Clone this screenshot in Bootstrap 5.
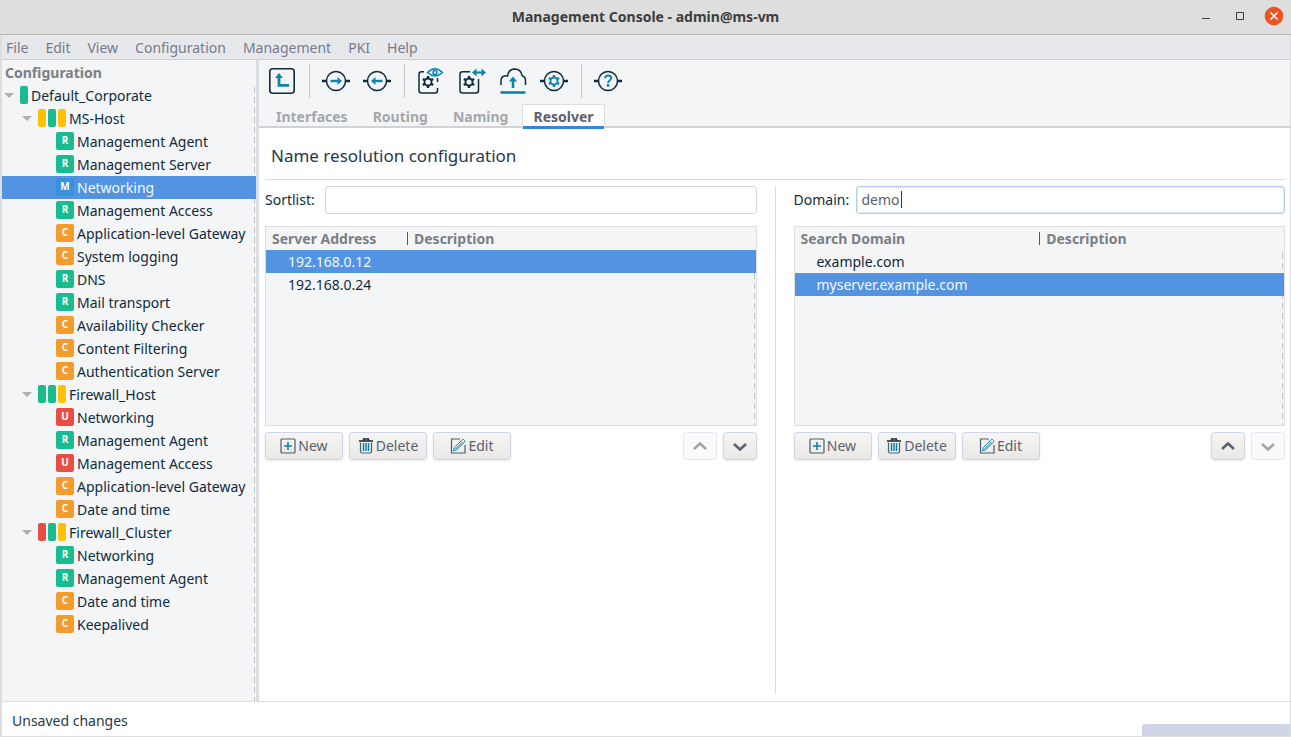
<!DOCTYPE html>
<html lang="en">
<head>
<meta charset="utf-8">
<meta name="viewport" content="width=device-width, initial-scale=1">
<title>Management Console - admin@ms-vm</title>
<link rel="stylesheet" href="https://cdn.jsdelivr.net/npm/bootstrap@5.3.0/dist/css/bootstrap.min.css">
<style>
:root { --ink:#0f2b3d; --panel:#f4f5f7; --line:#dcdee2; --sel:#5294e2; --teal:#0f83ad; --ok:#19bc8e; --warn:#ffc107; --bad:#e74f43; --conf:#f39c2e; }
body { font-family:"Noto Sans","Open Sans",sans-serif; font-size:14px; line-height:22px; color:var(--ink); background:#fff; white-space:nowrap; }
.app-window { border:solid #dddee0; border-width:0 1px 1px 2px; }
.title-strip { height:35px; background:#dedede; border-bottom:1px solid #b6b6b6; margin:0 -1px 0 -2px; color:#3d3d3d; }
.title-strip h1 { font-size:14px; line-height:22px; }
.win-buttons { right:7px; top:6px; }
.win-buttons button, .tool-button { background:none; border:0; padding:0; }
.menu-strip { height:25px; background:#e7e8ec; border-bottom:1px solid #cbced4; padding:2px 0 0 4px; gap:17px; }
.menu-strip a { color:#767b8c; font-size:14px; }
.side { width:257px; background:var(--panel); border-right:3px solid #dadde3; }
.side h2 { font-size:14px; line-height:22px; color:#7b7f86; padding:2px 0 0 3px; }
.edge { background-image:repeating-linear-gradient(to bottom,#bfc2c6 0 6px,transparent 6px 10px); background-size:1px 100%; background-repeat:no-repeat; background-position:right 1px top 3px; }
.tree, .tree ul { list-style:none; margin:0; padding:0; }
.tree-row { height:23px; gap:3px; }
.lvl-1 { padding-left:2px; } .lvl-2 { padding-left:20px; } .lvl-3 { padding-left:54px; }
.picked { background-color:var(--sel); color:#f3f7fd; }
.twisty { width:10px; height:5px; background:#adb0b4; clip-path:polygon(0 0,100% 0,50% 100%); margin-right:3px; }
.bars { gap:2px; margin-bottom:1px; }
.bars i { width:8px; height:18px; border-radius:2px; }
.state { width:18px; height:18px; margin-bottom:1px; border-radius:2px; color:#fff; font:700 10px/17px "Open Sans",sans-serif; text-align:center; }
.s-ok { background:var(--ok); } .s-warn { background:var(--warn); } .s-bad { background:var(--bad); } .s-conf { background:var(--conf); } .s-mod { background:#3792dc; }
.tool-strip { background:var(--panel); height:44px; padding:0 0 2px 9px; gap:13px; }
.tool-button { width:28px; height:28px; }
.tool-button svg, .win-buttons svg { display:block; }
.tool-sep { width:1px; height:34px; margin-right:-1px; background:#c5c7ca; }
.tab-strip { background:var(--panel); height:24px; padding-left:6px; gap:3px; box-shadow:inset 0 -2px #d1d2d5; }
.tab-strip button { border:1px solid transparent; border-bottom:0; background:none; color:#a5a7ab; font-size:14px; font-weight:700; line-height:24px; height:25px; padding:0 10px; }
.tab-strip .current { color:#5c616c; background:#fff; border-color:var(--line); box-shadow:inset 0 -3px #3584e4; }
.page { padding:0 5px 7px 6px; }
.page h2 { font-size:17px; line-height:24px; padding:16px 6px 11px; margin:0 0 6px; border-bottom:1px solid var(--line); color:#26394a; }
.half { flex:1 1 0; min-width:0; }
.divider { width:1px; background:var(--line); margin:0 18px; }
.sort-label { width:60px; }
.domain-label { width:62px; }
.field { height:28px; border:1px solid #cfd6e6; border-radius:3px; padding:0 5px 2px; color:#5c616c; font-size:14px; outline:0; background:#fff; }
.field.active { border-color:#b7cbe9; box-shadow:inset 0 0 0 1px #e0eaf8; }
.cursor { width:1px; height:17px; background:#30343c; left:45px; top:5px; }
.grid-box { height:200px; background-color:var(--panel); border:1px solid var(--line); margin:12px 0 6px; overflow:hidden; background-position:right 1px top 26px; }
.grid-box table { width:100%; table-layout:fixed; border-collapse:separate; border-spacing:0; }
.grid-box th { height:23px; padding:0 6px; color:#7b7f86; line-height:22px; }
.grid-box th + th { background:linear-gradient(#555a63,#555a63) 0 5px/1px 13px no-repeat; padding-left:7px; }
.grid-box td { height:23px; padding:0 22px; line-height:22px; }
.col-address { width:141px; }
.actions { gap:6px; }
.act { height:28px; min-width:78px; font-size:14px; line-height:22px; color:#5c616c; border:1px solid #cfd6e6; border-radius:3px; background:linear-gradient(#f6f5f4,#e9e8e6); box-shadow:0 1px 3px rgba(0,0,0,.08); padding:0; }
.act svg { margin:-3px 2px 0 0; }
.act.arrow { min-width:34px; }
.act.arrow svg { margin-right:0; }
.act:disabled { background:#fafafa; border-color:#e4e6f1; box-shadow:none; color:#a4a5aa; }
.status-strip { height:35px; border-top:1px solid var(--line); padding-left:10px; color:#26394a; }
.status-strip .note { padding-top:3px; }
.meter { width:148px; height:12px; background:#d0d5e5; border-radius:3px 0 0 0; }
</style>
</head>
<body>
<svg width="0" height="0" class="position-absolute" aria-hidden="true">
  <symbol id="i-gear" viewBox="0 0 14 14"><g fill="none" stroke="currentColor"><circle cx="7" cy="7" r="3.8" stroke-width="2"/><path d="M7 .5v2.400M7 11.100v2.400M1.400 3.700l2 1.200M10.600 9.100l2 1.200M1.400 10.300l2-1.200M10.600 4.900l2-1.200" stroke-width="2.600"/></g></symbol>
  <symbol id="i-ring" viewBox="0 0 28 28"><g fill="none" stroke="#0f2b3d"><circle cx="14" cy="14" r="9.500" stroke-width="1.500"/><path d="M0 14h5M23 14h5" stroke-width="2.600"/></g></symbol>
  <symbol id="i-plus" viewBox="0 0 16 16"><rect x="1" y="1" width="14" height="14" rx="1" fill="none" stroke="#49606e" stroke-width="1.200"/><path d="M8 4v8M4 8h8" stroke="#0f83ad" stroke-width="1.600"/></symbol>
  <symbol id="i-bin" viewBox="0 0 16 16"><path d="M2.500 4.500v9q0 1.500 1.500 1.500h8q1.500 0 1.500-1.500v-9" fill="none" stroke="#49606e" stroke-width="1.200"/><path d="M1 3h14M5.500 2.500V1h5v1.500" fill="none" stroke="#0f2b3d" stroke-width="1.300"/><path d="M5.500 5v8M8 5v8M10.500 5v8" stroke="#0f83ad" stroke-width="1.500"/></symbol>
  <symbol id="i-pen" viewBox="0 0 16 16"><path d="M10 1H1.500v14H15V7" fill="none" stroke="#49606e" stroke-width="1.200"/><path d="M3.500 12.800l.8-3.200 8-8q.6-.6 1.300 0l1 1q.6.700 0 1.300l-8 8zM5.500 11l7-7" fill="none" stroke="#0f83ad"/></symbol>
  <symbol id="i-up" viewBox="0 0 16 16"><path d="M2 11l6-5.500 6 5.500" fill="none" stroke="currentColor" stroke-width="2.600"/></symbol>
  <symbol id="i-down" viewBox="0 0 16 16"><path d="M2 6l6 5.500L14 6" fill="none" stroke="currentColor" stroke-width="2.600"/></symbol>
</svg>

<div class="app-window d-flex flex-column min-vh-100">
  <header class="title-strip position-relative d-flex align-items-center justify-content-center">
    <h1 class="m-0 fw-bold">Management Console - admin@ms-vm</h1>
    <div class="win-buttons position-absolute d-flex">
      <button type="button" aria-label="Minimize"><svg width="34" height="20"><path d="M9 12.500h8" stroke="#3d3d3d"/></svg></button>
      <button type="button" aria-label="Maximize"><svg width="37" height="20"><rect x="9.500" y="6.500" width="7" height="7" fill="none" stroke="#3d3d3d"/></svg></button>
      <button type="button" aria-label="Close"><svg width="20" height="20"><circle cx="10" cy="10" r="9.300" fill="#e95420"/><path d="M6.500 6.500l7 7M13.500 6.500l-7 7" stroke="#fff" stroke-width="1.500"/></svg></button>
    </div>
  </header>
  <nav class="menu-strip d-flex align-items-center" aria-label="Main menu">
    <a class="text-decoration-none" href="#">File</a><a class="text-decoration-none" href="#">Edit</a><a class="text-decoration-none" href="#">View</a><a class="text-decoration-none" href="#">Configuration</a><a class="text-decoration-none" href="#">Management</a><a class="text-decoration-none" href="#">PKI</a><a class="text-decoration-none" href="#">Help</a>
  </nav>

  <div class="d-flex flex-grow-1">
    <aside class="side flex-shrink-0 d-flex flex-column">
      <h2 class="m-0 fw-bold">Configuration</h2>
      <div class="edge flex-grow-1">
      <ul class="tree">
        <li><div class="tree-row lvl-1 d-flex align-items-center"><span class="twisty"></span><span class="bars d-flex"><i class="s-ok"></i></span>Default_Corporate</div>
        <ul>
          <li><div class="tree-row lvl-2 d-flex align-items-center"><span class="twisty"></span><span class="bars d-flex"><i class="s-warn"></i><i class="s-ok"></i><i class="s-warn"></i></span>MS-Host</div>
          <ul>
            <li class="tree-row lvl-3 d-flex align-items-center"><span class="state s-ok">R</span>Management Agent</li>
            <li class="tree-row lvl-3 d-flex align-items-center"><span class="state s-ok">R</span>Management Server</li>
            <li class="tree-row lvl-3 d-flex align-items-center picked"><span class="state s-mod">M</span>Networking</li>
            <li class="tree-row lvl-3 d-flex align-items-center"><span class="state s-ok">R</span>Management Access</li>
            <li class="tree-row lvl-3 d-flex align-items-center"><span class="state s-conf">C</span>Application-level Gateway</li>
            <li class="tree-row lvl-3 d-flex align-items-center"><span class="state s-conf">C</span>System logging</li>
            <li class="tree-row lvl-3 d-flex align-items-center"><span class="state s-ok">R</span>DNS</li>
            <li class="tree-row lvl-3 d-flex align-items-center"><span class="state s-ok">R</span>Mail transport</li>
            <li class="tree-row lvl-3 d-flex align-items-center"><span class="state s-conf">C</span>Availability Checker</li>
            <li class="tree-row lvl-3 d-flex align-items-center"><span class="state s-conf">C</span>Content Filtering</li>
            <li class="tree-row lvl-3 d-flex align-items-center"><span class="state s-conf">C</span>Authentication Server</li>
          </ul></li>
          <li><div class="tree-row lvl-2 d-flex align-items-center"><span class="twisty"></span><span class="bars d-flex"><i class="s-ok"></i><i class="s-ok"></i><i class="s-warn"></i></span>Firewall_Host</div>
          <ul>
            <li class="tree-row lvl-3 d-flex align-items-center"><span class="state s-bad">U</span>Networking</li>
            <li class="tree-row lvl-3 d-flex align-items-center"><span class="state s-ok">R</span>Management Agent</li>
            <li class="tree-row lvl-3 d-flex align-items-center"><span class="state s-bad">U</span>Management Access</li>
            <li class="tree-row lvl-3 d-flex align-items-center"><span class="state s-conf">C</span>Application-level Gateway</li>
            <li class="tree-row lvl-3 d-flex align-items-center"><span class="state s-conf">C</span>Date and time</li>
          </ul></li>
          <li><div class="tree-row lvl-2 d-flex align-items-center"><span class="twisty"></span><span class="bars d-flex"><i class="s-bad"></i><i class="s-ok"></i><i class="s-warn"></i></span>Firewall_Cluster</div>
          <ul>
            <li class="tree-row lvl-3 d-flex align-items-center"><span class="state s-ok">R</span>Networking</li>
            <li class="tree-row lvl-3 d-flex align-items-center"><span class="state s-ok">R</span>Management Agent</li>
            <li class="tree-row lvl-3 d-flex align-items-center"><span class="state s-conf">C</span>Date and time</li>
            <li class="tree-row lvl-3 d-flex align-items-center"><span class="state s-conf">C</span>Keepalived</li>
          </ul></li>
        </ul></li>
      </ul>
      </div>
    </aside>

    <main class="flex-grow-1 d-flex flex-column">
      <div class="tool-strip d-flex align-items-center">
        <button class="tool-button" type="button" aria-label="Up"><svg width="28" height="28"><rect x="1.800" y="1.800" width="24.400" height="24.400" rx="3" fill="none" stroke="#0f2b3d" stroke-width="1.600"/><path d="M11 9v9.300h10" fill="none" stroke="#0f83ad" stroke-width="2.800"/><path d="M7 11l4-5 4 5z" fill="#0f83ad"/></svg></button>
        <span class="tool-sep"></span>
        <button class="tool-button" type="button" aria-label="Upload"><svg width="28" height="28"><use href="#i-ring"/><path d="M8.500 14h9" stroke="#0f83ad" stroke-width="2.400"/><path d="M15.500 10l4.500 4-4.500 4z" fill="#0f83ad"/></svg></button>
        <button class="tool-button" type="button" aria-label="Download"><svg width="28" height="28"><use href="#i-ring"/><path d="M10.500 14h9" stroke="#0f83ad" stroke-width="2.400"/><path d="M12.500 10L8 14l4.500 4z" fill="#0f83ad"/></svg></button>
        <span class="tool-sep"></span>
        <button class="tool-button" type="button" aria-label="View configuration"><svg width="28" height="28"><path d="M7 4.800H4.500q-2.500 0-2.500 2.500v16.200q0 2.500 2.500 2.500h13.500q2.500 0 2.500-2.500V21M20.500 15v-4" fill="none" stroke="#0f2b3d" stroke-width="1.500"/><use href="#i-gear" x="4.500" y="8.500" width="13" height="13" color="#0f2b3d"/><path d="M10.500 5.500q7.500-7.500 15 0-7.500 7-15 0z" fill="#e8f5fa" stroke="#0f83ad" stroke-width="1.500"/><circle cx="18" cy="5.500" r="1.900" fill="none" stroke="#0f83ad" stroke-width="1.500"/></svg></button>
        <button class="tool-button" type="button" aria-label="Compare configuration"><svg width="28" height="28"><path d="M12 4.800H4.500q-2.500 0-2.500 2.500v16.200q0 2.500 2.500 2.500h13.500q2.500 0 2.500-2.500V12" fill="none" stroke="#0f2b3d" stroke-width="1.500"/><use href="#i-gear" x="4.500" y="8.500" width="13" height="13" color="#0f2b3d"/><path d="M16 5.500h9" stroke="#0f83ad" stroke-width="2.200"/><path d="M18.500 1.500v8l-4.500-4zM23.500 1.500v8l4.500-4z" fill="#0f83ad"/></svg></button>
        <button class="tool-button" type="button" aria-label="Commit"><svg width="28" height="28"><path d="M2 18v-4q0-4.500 3.500-5 1.500-.4 3 0Q9.500 2.200 15.500 2q6.500 0 7.500 6.500 3.500 1.200 3.500 5.500v4" fill="none" stroke="#0f2b3d" stroke-width="1.500"/><path d="M14 21v-8" stroke="#0f83ad" stroke-width="2.600"/><path d="M9.800 14.500l4.200-5 4.200 5z" fill="#0f83ad"/><path d="M1.500 25.500h25" stroke="#0f83ad" stroke-width="2.600"/></svg></button>
        <button class="tool-button" type="button" aria-label="Settings"><svg width="28" height="28"><use href="#i-ring"/><use href="#i-gear" x="7.500" y="7.500" width="13" height="13" color="#0f83ad"/></svg></button>
        <span class="tool-sep"></span>
        <button class="tool-button" type="button" aria-label="Help"><svg width="28" height="28"><use href="#i-ring"/><path d="M11 11.200q.3-2.700 3.200-2.700 3 0 3 2.500 0 1.500-1.600 2.500-1.500.9-1.500 2.400" fill="none" stroke="#0f83ad" stroke-width="2"/><circle cx="14" cy="18.500" r="1.400" fill="#0f83ad"/></svg></button>
      </div>
      <div class="tab-strip d-flex" role="tablist">
        <button type="button" role="tab">Interfaces</button>
        <button type="button" role="tab">Routing</button>
        <button type="button" role="tab">Naming</button>
        <button type="button" role="tab" class="current" aria-selected="true">Resolver</button>
      </div>
      <div class="page flex-grow-1 d-flex flex-column">
        <h2 class="fw-normal">Name resolution configuration</h2>
        <div class="d-flex flex-grow-1">
          <section class="half">
            <div class="d-flex align-items-center">
              <label class="sort-label" for="sortlist">Sortlist:</label>
              <input class="field flex-grow-1" id="sortlist" type="text">
            </div>
            <div class="grid-box edge">
              <table>
                <colgroup><col class="col-address"><col></colgroup>
                <thead><tr><th>Server Address</th><th>Description</th></tr></thead>
                <tbody><tr class="picked"><td>192.168.0.12</td><td></td></tr><tr><td>192.168.0.24</td><td></td></tr></tbody>
              </table>
            </div>
            <div class="actions d-flex">
              <button class="act" type="button"><svg width="16" height="16"><use href="#i-plus"/></svg>New</button>
              <button class="act" type="button"><svg width="16" height="16"><use href="#i-bin"/></svg>Delete</button>
              <button class="act" type="button"><svg width="16" height="16"><use href="#i-pen"/></svg>Edit</button>
              <button class="act arrow ms-auto" type="button" aria-label="Move up" disabled><svg width="16" height="16"><use href="#i-up"/></svg></button>
              <button class="act arrow" type="button" aria-label="Move down"><svg width="16" height="16"><use href="#i-down"/></svg></button>
            </div>
          </section>
          <div class="divider"></div>
          <section class="half">
            <div class="d-flex align-items-center">
              <label class="domain-label" for="domain">Domain:</label>
              <div class="position-relative flex-grow-1 d-flex"><input class="field active w-100" id="domain" type="text" value="demo"><span class="cursor position-absolute"></span></div>
            </div>
            <div class="grid-box edge">
              <table>
                <colgroup><col class="w-50"><col></colgroup>
                <thead><tr><th>Search Domain</th><th>Description</th></tr></thead>
                <tbody><tr><td>example.com</td><td></td></tr><tr class="picked"><td>myserver.example.com</td><td></td></tr></tbody>
              </table>
            </div>
            <div class="actions d-flex">
              <button class="act" type="button"><svg width="16" height="16"><use href="#i-plus"/></svg>New</button>
              <button class="act" type="button"><svg width="16" height="16"><use href="#i-bin"/></svg>Delete</button>
              <button class="act" type="button"><svg width="16" height="16"><use href="#i-pen"/></svg>Edit</button>
              <button class="act arrow ms-auto" type="button" aria-label="Move up"><svg width="16" height="16"><use href="#i-up"/></svg></button>
              <button class="act arrow" type="button" aria-label="Move down" disabled><svg width="16" height="16"><use href="#i-down"/></svg></button>
            </div>
          </section>
        </div>
      </div>
    </main>
  </div>
  <footer class="status-strip d-flex align-items-center justify-content-between"><span class="note">Unsaved changes</span><span class="meter align-self-end"></span></footer>
</div>
<script src="https://cdn.jsdelivr.net/npm/bootstrap@5.3.0/dist/js/bootstrap.bundle.min.js"></script>
</body>
</html>
